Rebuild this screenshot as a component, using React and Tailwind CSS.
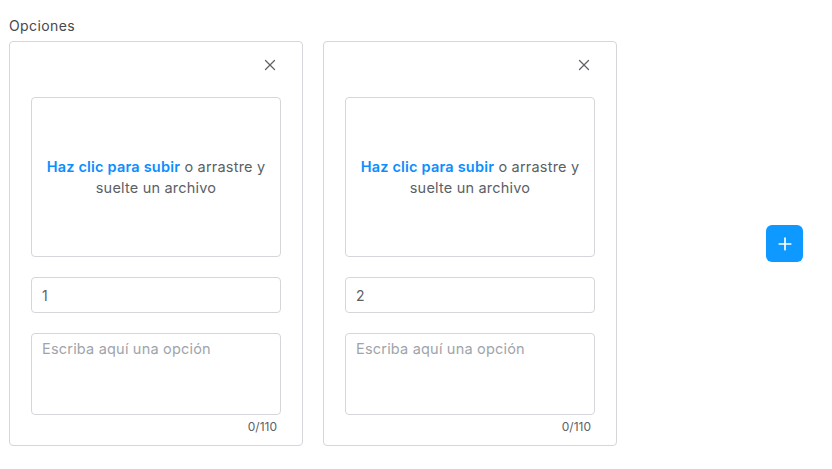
import { X, Plus } from 'lucide-react';

function OptionCard({ value }) {
  return (
    <div className="w-[294px] h-[405px] shrink-0 rounded-[4px] border border-[#d4d6da] bg-white px-[21px] pt-[14px]">
      <div className="flex justify-end pr-[2px]">
        <button type="button" className="text-[#5f6368]" aria-label="Eliminar">
          <X className="w-[18px] h-[18px]" strokeWidth={1.7} />
        </button>
      </div>
      <div className="mt-[23px] h-[160px] rounded-[4px] border border-[#d4d6da] flex items-center justify-center px-3 text-center text-[14.5px] leading-[21px] tracking-[0.2px] text-[#5b5f66]">
        <p>
          <span className="font-semibold text-[#0b8eff]">Haz clic para subir</span> o arrastre y suelte un archivo
        </p>
      </div>
      <input
        type="text"
        defaultValue={value}
        className="mt-[20px] block w-full h-[36px] rounded-[4px] border border-[#d4d6da] px-[10px] text-[14px] text-[#5b5f66] outline-none"
      />
      <textarea
        placeholder="Escriba aquí una opción"
        className="mt-[20px] block w-full h-[82px] resize-none rounded-[4px] border border-[#d4d6da] px-[10px] py-[4px] text-[14.5px] tracking-[0.2px] text-[#5b5f66] placeholder:text-[#a0a4aa] outline-none"
      />
      <div className="mt-[3px] pr-[4px] text-right text-[12px] text-[#5b5f66]">0/110</div>
    </div>
  );
}

export default function App() {
  return (
    <div className="w-[832px] h-[469px] bg-white px-[9px] pt-[16px] font-['Inter','Noto_Sans',sans-serif]">
      <h2 className="text-[14px] leading-[20px] tracking-[0.4px] text-[#45494f] font-normal">Opciones</h2>
      <div className="mt-[5px] flex items-start">
        <div className="flex gap-[20px]">
          <OptionCard value="1" />
          <OptionCard value="2" />
        </div>
        <div className="ml-[149px] pt-[184px]">
          <button
            type="button"
            aria-label="Agregar opción"
            className="w-[37px] h-[37px] rounded-[6px] bg-[#0d99ff] text-white flex items-center justify-center"
          >
            <Plus className="w-[20px] h-[20px]" strokeWidth={2} />
          </button>
        </div>
      </div>
    </div>
  );
}
